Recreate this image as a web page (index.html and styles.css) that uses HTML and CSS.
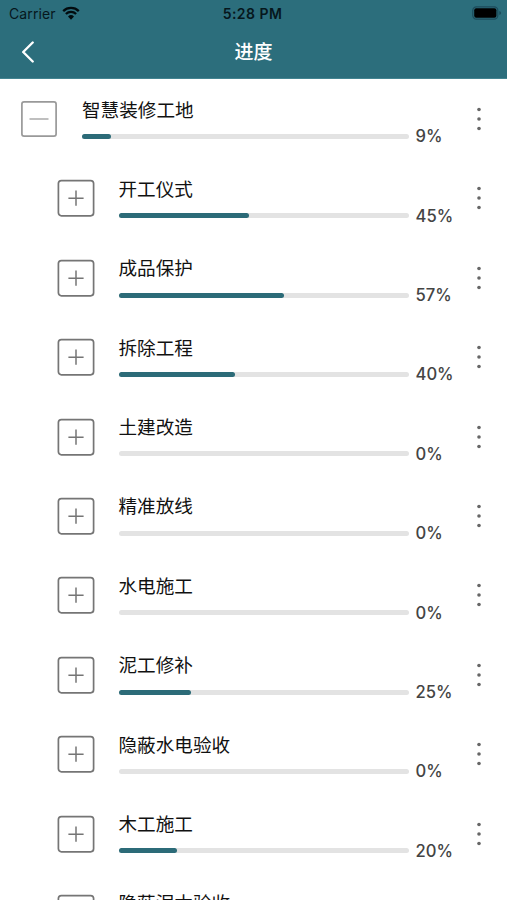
FILE: index.html
```html
<!DOCTYPE html>
<html lang="zh-CN">
<head>
<meta charset="utf-8">
<title>进度</title>
<link rel="stylesheet" href="styles.css">
</head>
<body>
<svg class="defs" width="0" height="0" aria-hidden="true">
  <symbol id="plus" viewBox="0 0 38 38"><rect x="1.4" y="1.6" width="35.2" height="35.2" rx="3"/><path class="thin" d="M11.4 19.2h15.2M19 11.6v15.2"/></symbol>
  <symbol id="minus" viewBox="0 0 38 38"><rect x="1.9" y="1.9" width="34.2" height="34.2" rx="2.2"/><path class="faint" d="M9.5 19h19"/></symbol>
  <symbol id="more" viewBox="0 0 6 26"><circle cx="3" cy="3.5" r="1.8"/><circle cx="3" cy="13" r="1.8"/><circle cx="3" cy="22.5" r="1.8"/></symbol>
</svg>
<header class="header">
  <div class="status">
    <div class="carrier"><span>Carrier</span>
      <svg class="wifi" viewBox="0 0 18 14"><path d="M1.2 5.1a11.2 11.2 0 0 1 15.6 0M3.9 8a7.4 7.4 0 0 1 10.2 0" fill="none" stroke="#020b0e" stroke-width="2.3"/><path d="M9 13.7 6 10.5a4.4 4.4 0 0 1 6 0z" fill="#020b0e"/></svg>
    </div>
    <div class="clock">5:28 PM</div>
    <svg class="battery" viewBox="0 0 30 14"><rect x=".8" y=".8" width="25" height="12.4" rx="3.6" fill="none" stroke="#1c4b5b" stroke-width="1.2"/><rect x="2.2" y="2.3" width="22.2" height="9.4" rx="2" fill="#000"/><path d="M27.3 5v4q1.8-.6 1.8-2t-1.8-2" fill="#1c4b5b"/></svg>
  </div>
  <nav class="nav">
    <svg class="back" viewBox="0 0 14 22"><path d="M11.7 1.5 2.2 11l9.5 9.5"/></svg>
    <h1>进度</h1>
  </nav>
</header>
<main class="list"></main>
<script src="app.js"></script>
</body>
</html>
```
FILE: styles.css
```css
* { box-sizing: border-box; }
body {
  margin: 0;
  height: 900px;
  overflow: hidden;
  display: flex;
  flex-direction: column;
  background: #fff;
  color: #111;
  font-family: Inter, "Noto Sans CJK SC", sans-serif;
}
.defs { position: absolute; }
.header { flex: none; height: 79px; background: #2c6e7c; border-bottom: 1px solid #438491; }
.status {
  height: 27px;
  padding: 0 5px 0 9px;
  display: grid;
  grid-template-columns: 1fr auto 1fr;
  align-items: center;
  color: #06171c;
  font-size: 14px;
}
.carrier { display: flex; align-items: center; gap: 6px; letter-spacing: .1px; }
.wifi { width: 18px; height: 14px; margin-top: -2px; }
.clock { font-weight: 600; letter-spacing: .45px; margin: 0 3px 0 -3px; }
.battery { width: 30px; height: 14px; margin-top: -1px; justify-self: end; }
.nav {
  height: 51px;
  padding: 0 21px;
  display: grid;
  grid-template-columns: 1fr auto 1fr;
  align-items: center;
}
.back { width: 14px; height: 22px; margin-top: -1px; fill: none; stroke: #fff; stroke-width: 2.4; stroke-linecap: round; stroke-linejoin: round; }
.nav h1 { margin: 1px 0 0; color: #fff; font-size: 19px; line-height: 28px; font-weight: 500; }
.list { flex: 1; min-height: 0; overflow: hidden; }
.row {
  height: 79.4px;
  padding: 0 25px 0 56.5px;
  display: flex;
  align-items: flex-start;
}
.row.root { padding-left: 20px; }
.toggle { flex: none; width: 38px; height: 38px; margin: 21px 24px 0 0; fill: none; stroke: #757575; stroke-width: 1.7; }
.thin { stroke-width: 1.5; }
.faint { stroke: #aaa; stroke-width: 1.5; }
.root .toggle { stroke: #999; }
.content { flex: 1; padding-top: 16.5px; }
.name { font-size: 18.6px; line-height: 28px; white-space: nowrap; }
.progress { height: 24px; margin-top: .8px; display: flex; align-items: center; gap: 7px; }
.track { flex: 1; height: 5px; border-radius: 3px; background: #e3e3e3; }
.fill { height: 100%; border-radius: 3px; background: #2c6b78; }
.percent { width: 50px; font-size: 16.6px; font-weight: 500; line-height: 24px; color: #444; }
.more { flex: none; width: 6px; height: 26px; margin: 27px 0 0 10.5px; fill: #666; }
```
FILE: app.js
```js
const items = [
  ["智慧装修工地", 9], ["开工仪式", 45], ["成品保护", 57], ["拆除工程", 40],
  ["土建改造", 0], ["精准放线", 0], ["水电施工", 0], ["泥工修补", 25],
  ["隐蔽水电验收", 0], ["木工施工", 20], ["隐蔽泥木验收", 0]
];
document.querySelector(".list").innerHTML = items.map(([name, value], i) => `
  <section class="row${i ? "" : " root"}">
    <svg class="toggle"><use href="#${i ? "plus" : "minus"}"/></svg>
    <div class="content">
      <div class="name">${name}</div>
      <div class="progress">
        <div class="track"><div class="fill" style="width:${value}%"></div></div>
        <div class="percent">${value}%</div>
      </div>
    </div>
    <svg class="more"><use href="#more"/></svg>
  </section>`).join("");
```
